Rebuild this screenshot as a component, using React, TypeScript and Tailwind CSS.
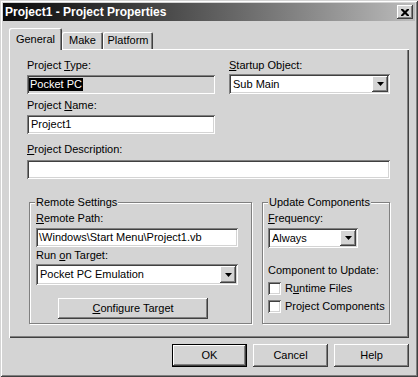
import React from 'react'

const raised =
  'bg-[#d4d4d4] shadow-[inset_-1px_-1px_0_#404040,inset_1px_1px_0_#ffffff,inset_-2px_-2px_0_#808080]'
const sunken =
  'shadow-[inset_1px_1px_0_#808080,inset_-1px_-1px_0_#ffffff,inset_2px_2px_0_#404040,inset_-2px_-2px_0_#d4d4d4]'

function Label({ children, className = '' }: { children: React.ReactNode; className?: string }) {
  return <div className={`h-[13px] leading-[13px] whitespace-nowrap ${className}`}>{children}</div>
}

function DownArrow() {
  return (
    <svg width="7" height="4" viewBox="0 0 7 4">
      <polygon points="0,0 7,0 3.5,4" fill="#000" />
    </svg>
  )
}

function Combo({ value, className = '' }: { value: string; className?: string }) {
  return (
    <div className={`bg-white flex items-center p-[2px] ${sunken} ${className}`}>
      <span className="flex-1 pl-[2px] leading-[13px] whitespace-nowrap">{value}</span>
      <div className={`w-[16px] h-full flex items-center justify-center ${raised}`}>
        <DownArrow />
      </div>
    </div>
  )
}

function GroupBox({
  title,
  className = '',
  children,
}: {
  title: string
  className?: string
  children: React.ReactNode
}) {
  return (
    <div
      className={`relative border border-[#808080] shadow-[1px_1px_0_#ffffff,inset_1px_1px_0_#ffffff] ${className}`}
    >
      <div className="absolute -top-[7px] left-[5px] px-[1px] bg-[#d4d4d4] leading-[13px] whitespace-nowrap">
        {title}
      </div>
      {children}
    </div>
  )
}

function CheckBox({ label }: { label: React.ReactNode }) {
  return (
    <div className="flex items-center gap-[4px] h-[13px]">
      <div className={`w-[13px] h-[13px] bg-white ${sunken}`}></div>
      <span className="leading-[13px] whitespace-nowrap">{label}</span>
    </div>
  )
}

function Button({ children, isDefault = false }: { children: React.ReactNode; isDefault?: boolean }) {
  if (isDefault) {
    return (
      <div className="w-[75px] h-[23px] border border-black">
        <div className={`w-full h-full flex items-center justify-center ${raised}`}>{children}</div>
      </div>
    )
  }
  return <div className={`w-[75px] h-[23px] flex items-center justify-center ${raised}`}>{children}</div>
}

export default function App() {
  return (
    <div className="w-[418px] h-[377px] bg-[#d4d4d4] flex flex-col text-[11px] text-black font-['Liberation_Sans',Arial,sans-serif] shadow-[inset_1px_1px_0_#d4d4d4,inset_-1px_-1px_0_#404040,inset_2px_2px_0_#ffffff,inset_-2px_-2px_0_#808080]">
      {/* title bar */}
      <div className="mt-[3px] mx-[3px] h-[18px] flex items-center bg-linear-to-r from-[#0c0c0c] to-[#bcbcbc]">
        <span className="pl-[2px] text-[12px] font-bold text-white whitespace-nowrap">
          Project1 - Project Properties
        </span>
        <div className={`ml-auto mr-[2px] w-[16px] h-[14px] flex items-center justify-center ${raised}`}>
          <svg width="8" height="7" viewBox="0 0 8 7">
            <path d="M0,0h2l2,2l2,-2h2v1l-2.5,2.5l2.5,2.5v1h-2l-2,-2l-2,2h-2v-1l2.5,-2.5l-2.5,-2.5z" fill="#000" />
          </svg>
        </div>
      </div>

      {/* tabs */}
      <div className="mt-[7px] ml-[9px] h-[21px] flex items-start">
        <div className="relative z-10 w-[53px] h-[22px] pt-[5px] text-center leading-[13px] bg-[#d4d4d4] rounded-t-[2px] shadow-[inset_1px_1px_0_#ffffff,inset_-1px_0_0_#404040,inset_-2px_0_0_#808080]">
          General
        </div>
        <div className="mt-[4px] w-[41px] h-[17px] pt-[2px] text-center leading-[13px] rounded-t-[2px] shadow-[inset_1px_1px_0_#ffffff,inset_-1px_0_0_#404040,inset_-2px_0_0_#808080]">
          Make
        </div>
        <div className="mt-[4px] w-[50px] h-[17px] pt-[2px] text-center leading-[13px] rounded-t-[2px] shadow-[inset_1px_1px_0_#ffffff,inset_-1px_0_0_#404040,inset_-2px_0_0_#808080]">
          Platform
        </div>
      </div>

      {/* panel */}
      <div className="ml-[9px] w-[400px] h-[289px] pt-[10px] pl-[18px] flex flex-col shadow-[inset_1px_1px_0_#ffffff,inset_-1px_-1px_0_#404040,inset_-2px_-2px_0_#808080]">
        <div className="flex gap-[14px]">
          <div className="w-[188px] flex flex-col">
            <Label>
              Project <u>T</u>ype:
            </Label>
            <div className={`mt-[3px] h-[19px] flex items-center pl-[2px] ${sunken}`}>
              <span className="bg-black text-white px-[1px] leading-[13px]">Pocket PC</span>
            </div>
            <Label className="mt-[5px]">
              Project <u>N</u>ame:
            </Label>
            <div className={`mt-[3px] h-[19px] flex items-center pl-[4px] bg-white ${sunken}`}>Project1</div>
          </div>
          <div className="w-[161px] flex flex-col">
            <Label>
              <u>S</u>tartup Object:
            </Label>
            <Combo value="Sub Main" className="mt-[2px] h-[20px]" />
          </div>
        </div>
        <Label className="mt-[9px]">
          <u>P</u>roject Description:
        </Label>
        <div className={`mt-[4px] w-[363px] h-[19px] bg-white ${sunken}`}></div>

        <div className="mt-[23px] ml-[2px] flex gap-[10px]">
          <GroupBox title="Remote Settings" className="w-[223px] h-[122px] pt-[9px] pl-[6px]">
            <Label>
              <u>R</u>emote Path:
            </Label>
            <div className={`mt-[3px] w-[202px] h-[19px] flex items-center pl-[3px] bg-white whitespace-nowrap ${sunken}`}>
              \Windows\Start Menu\Project1.vb
            </div>
            <Label className="mt-[2px]">
              Run <u>o</u>n Target:
            </Label>
            <Combo value="Pocket PC Emulation" className="mt-[2px] w-[202px] h-[21px]" />
            <div className={`mt-[13px] ml-[22px] w-[150px] h-[21px] flex items-center justify-center ${raised}`}>
              <span>
                <u>C</u>onfigure Target
              </span>
            </div>
          </GroupBox>
          <GroupBox title="Update Components" className="w-[128px] h-[122px] pt-[9px] pl-[5px]">
            <Label>
              <u>F</u>requency:
            </Label>
            <Combo value="Always" className="mt-[3px] w-[90px] h-[20px]" />
            <Label className="mt-[16px]">Component to Update:</Label>
            <div className="mt-[5px] flex flex-col gap-[5px]">
              <CheckBox
                label={
                  <>
                    R<u>u</u>ntime Files
                  </>
                }
              />
              <CheckBox label="Project Components" />
            </div>
          </GroupBox>
        </div>
      </div>

      {/* buttons */}
      <div className="mt-[6px] pr-[9px] flex justify-end gap-[6px]">
        <Button isDefault>OK</Button>
        <Button>Cancel</Button>
        <Button>Help</Button>
      </div>
    </div>
  )
}
